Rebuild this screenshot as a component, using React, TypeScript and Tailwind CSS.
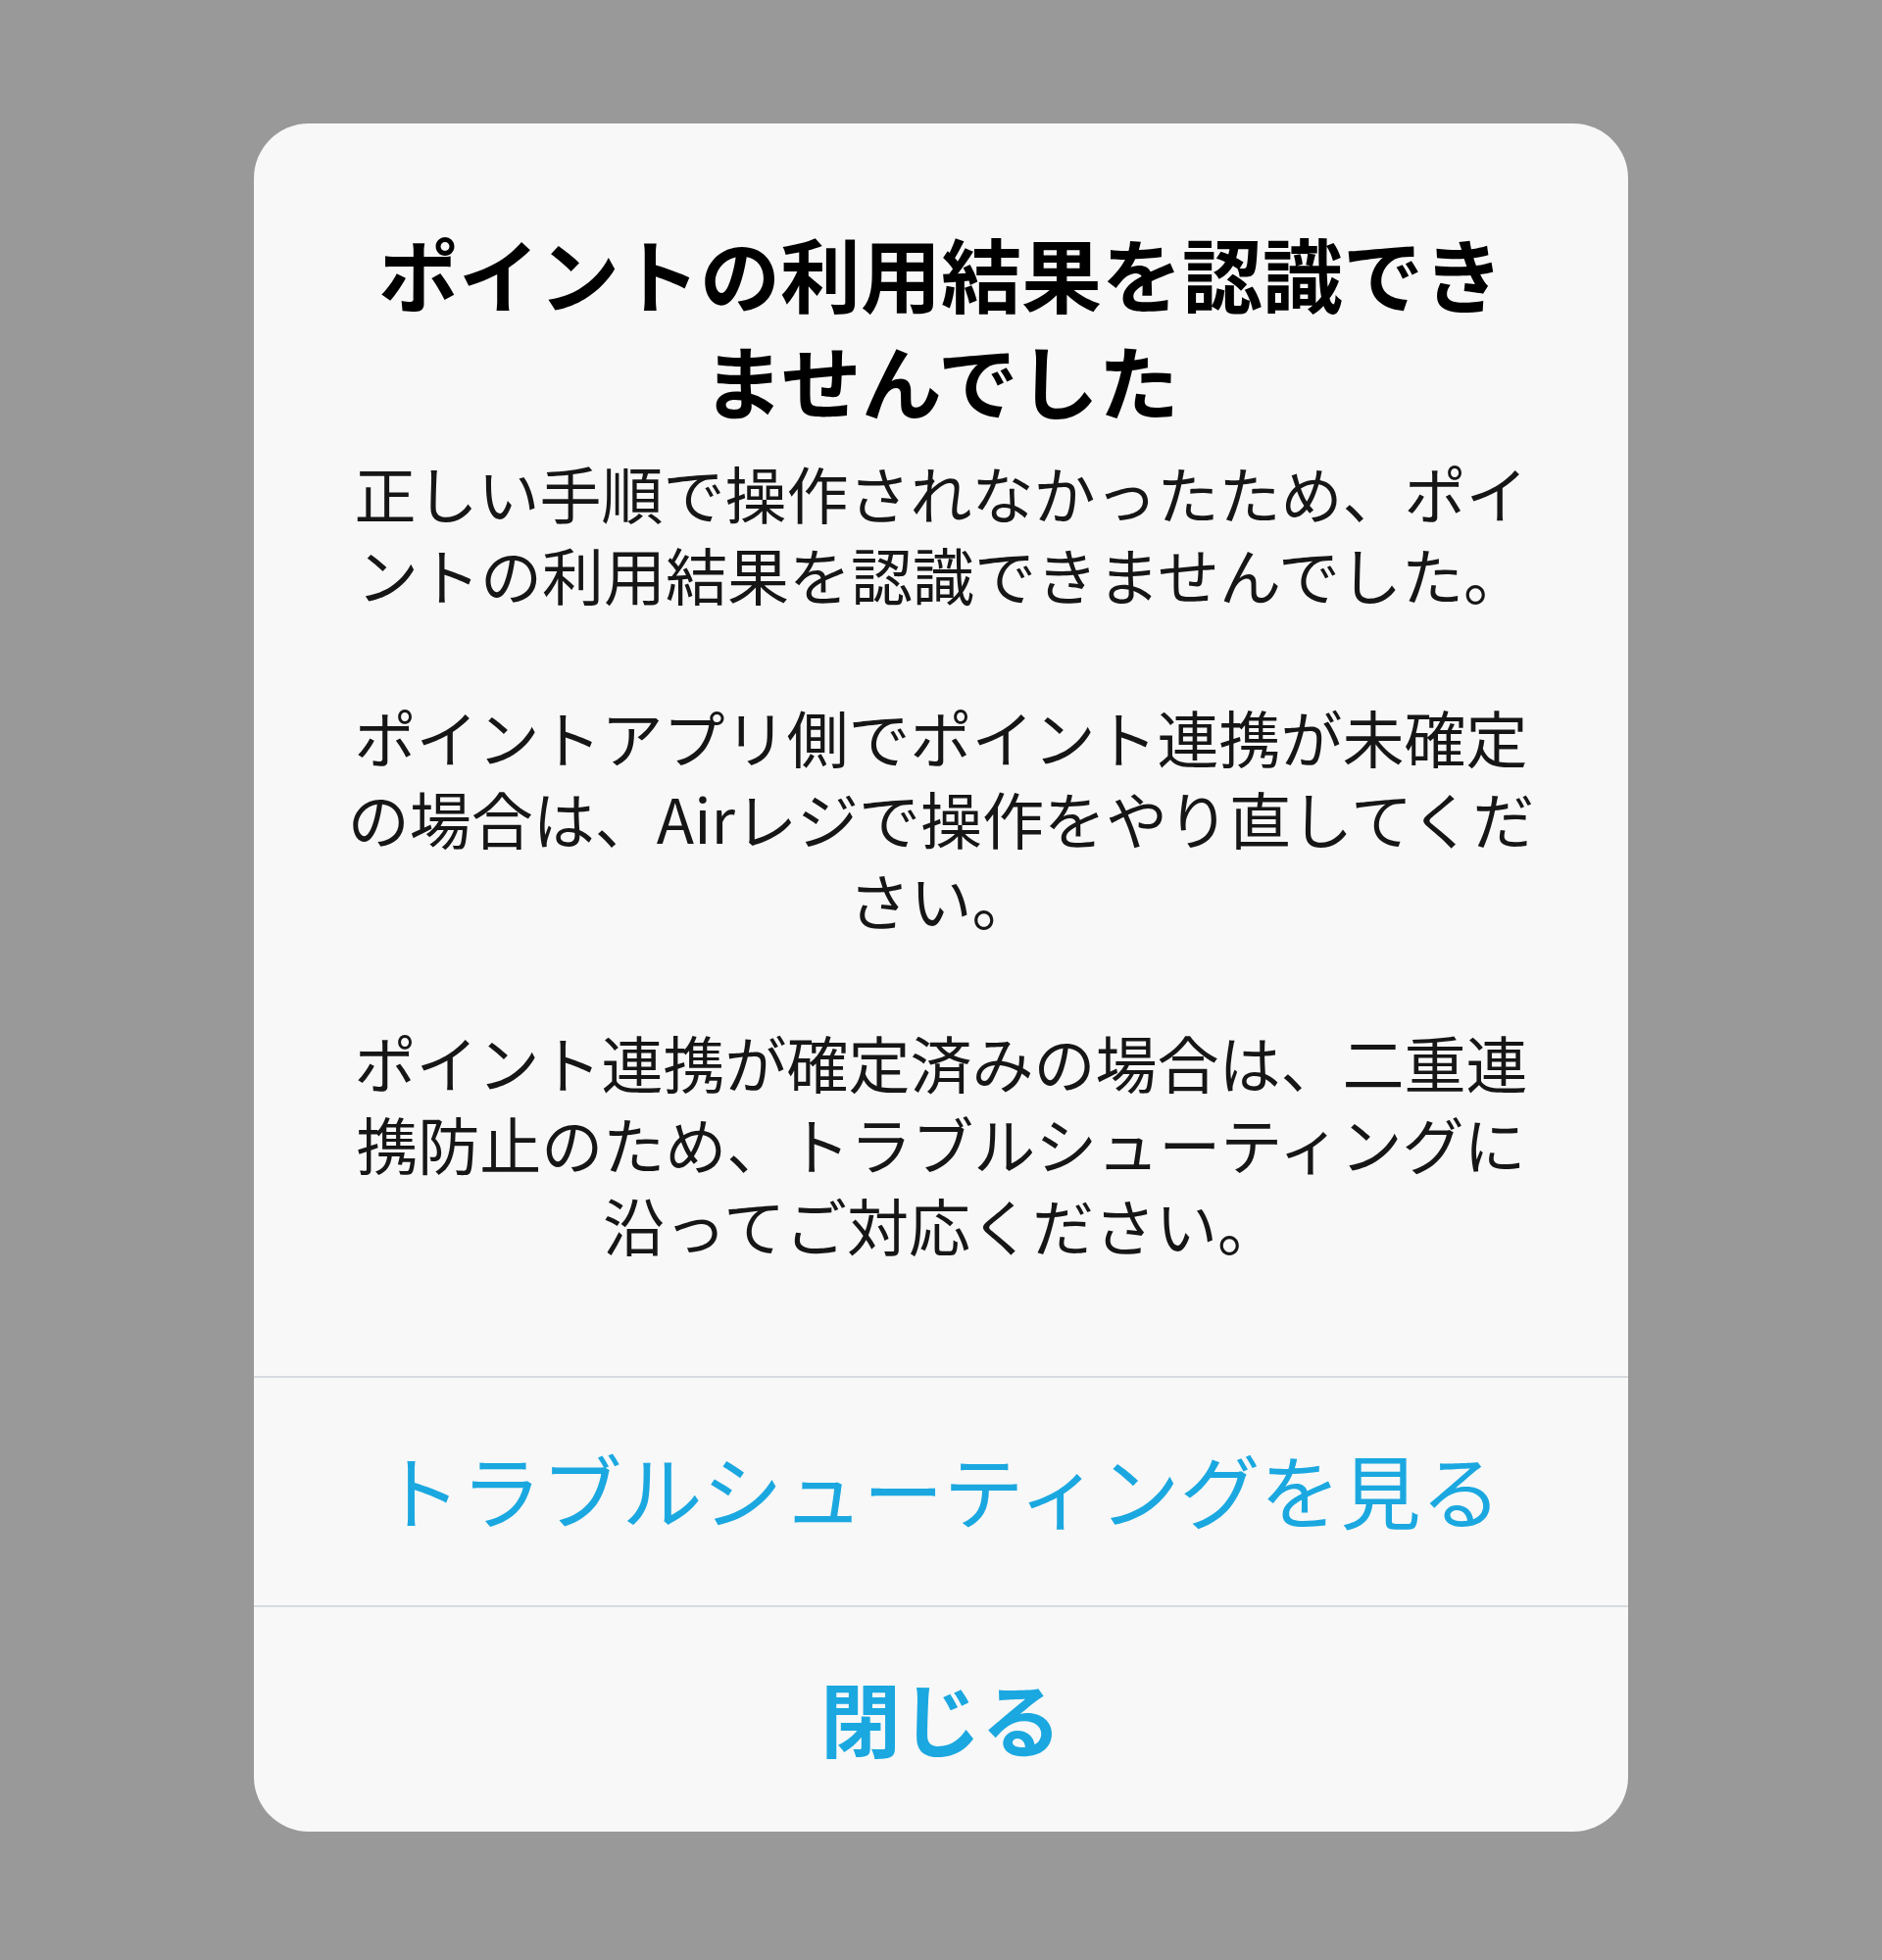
import React from 'react';

const jpFont = "font-['Noto_Sans_CJK_JP','Noto_Sans',sans-serif]";

const titleLines = ['ポイントの利用結果を認識でき', 'ませんでした'];

// 本文は段落ごとに行を分けて持つ
const paragraphs: string[][] = [
  ['正しい手順で操作されなかったため、ポイ', 'ントの利用結果を認識できませんでした。'],
  ['ポイントアプリ側でポイント連携が未確定', 'の場合は、Airレジで操作をやり直してくだ', 'さい。'],
  ['ポイント連携が確定済みの場合は、二重連', '携防止のため、トラブルシューティングに', '沿ってご対応ください。'],
];

function AlertBody() {
  return (
    <div className="flex flex-col items-center pt-[97px]">
      <h1 className="text-[82px] leading-[109px] font-bold text-black text-center">
        {titleLines.map((line) => (
          <span key={line} className="block whitespace-nowrap">
            {line}
          </span>
        ))}
      </h1>
      <div className="mt-[19px] flex flex-col gap-[83px] text-[63px] leading-[83px] text-[#161616] text-center">
        {paragraphs.map((lines, i) => (
          <p key={i}>
            {lines.map((line) => (
              <span key={line} className="block whitespace-nowrap">
                {line}
              </span>
            ))}
          </p>
        ))}
      </div>
    </div>
  );
}

function AlertButton({ label, bold, tall }: { label: string; bold?: boolean; tall?: boolean }) {
  return (
    <button
      className={`${tall ? 'h-[234px]' : 'h-[231px]'} w-full shrink-0 border-t-2 border-[#d6dbdf] pb-[6px] flex items-center justify-center text-[82px] leading-none text-[#1ba8e0] ${
        bold ? 'font-bold' : 'font-normal'
      }`}
    >
      {label}
    </button>
  );
}

export default function App() {
  return (
    <main className={`min-h-[2000px] w-full bg-[#999999] flex justify-center pt-[126px] ${jpFont}`}>
      <div className="w-[1402px] h-[1743px] rounded-[56px] bg-[#f8f8f8] overflow-hidden flex flex-col">
        <div className="flex-1">
          <AlertBody />
        </div>
        <AlertButton label="トラブルシューティングを見る" tall />
        <AlertButton label="閉じる" bold />
      </div>
    </main>
  );
}
